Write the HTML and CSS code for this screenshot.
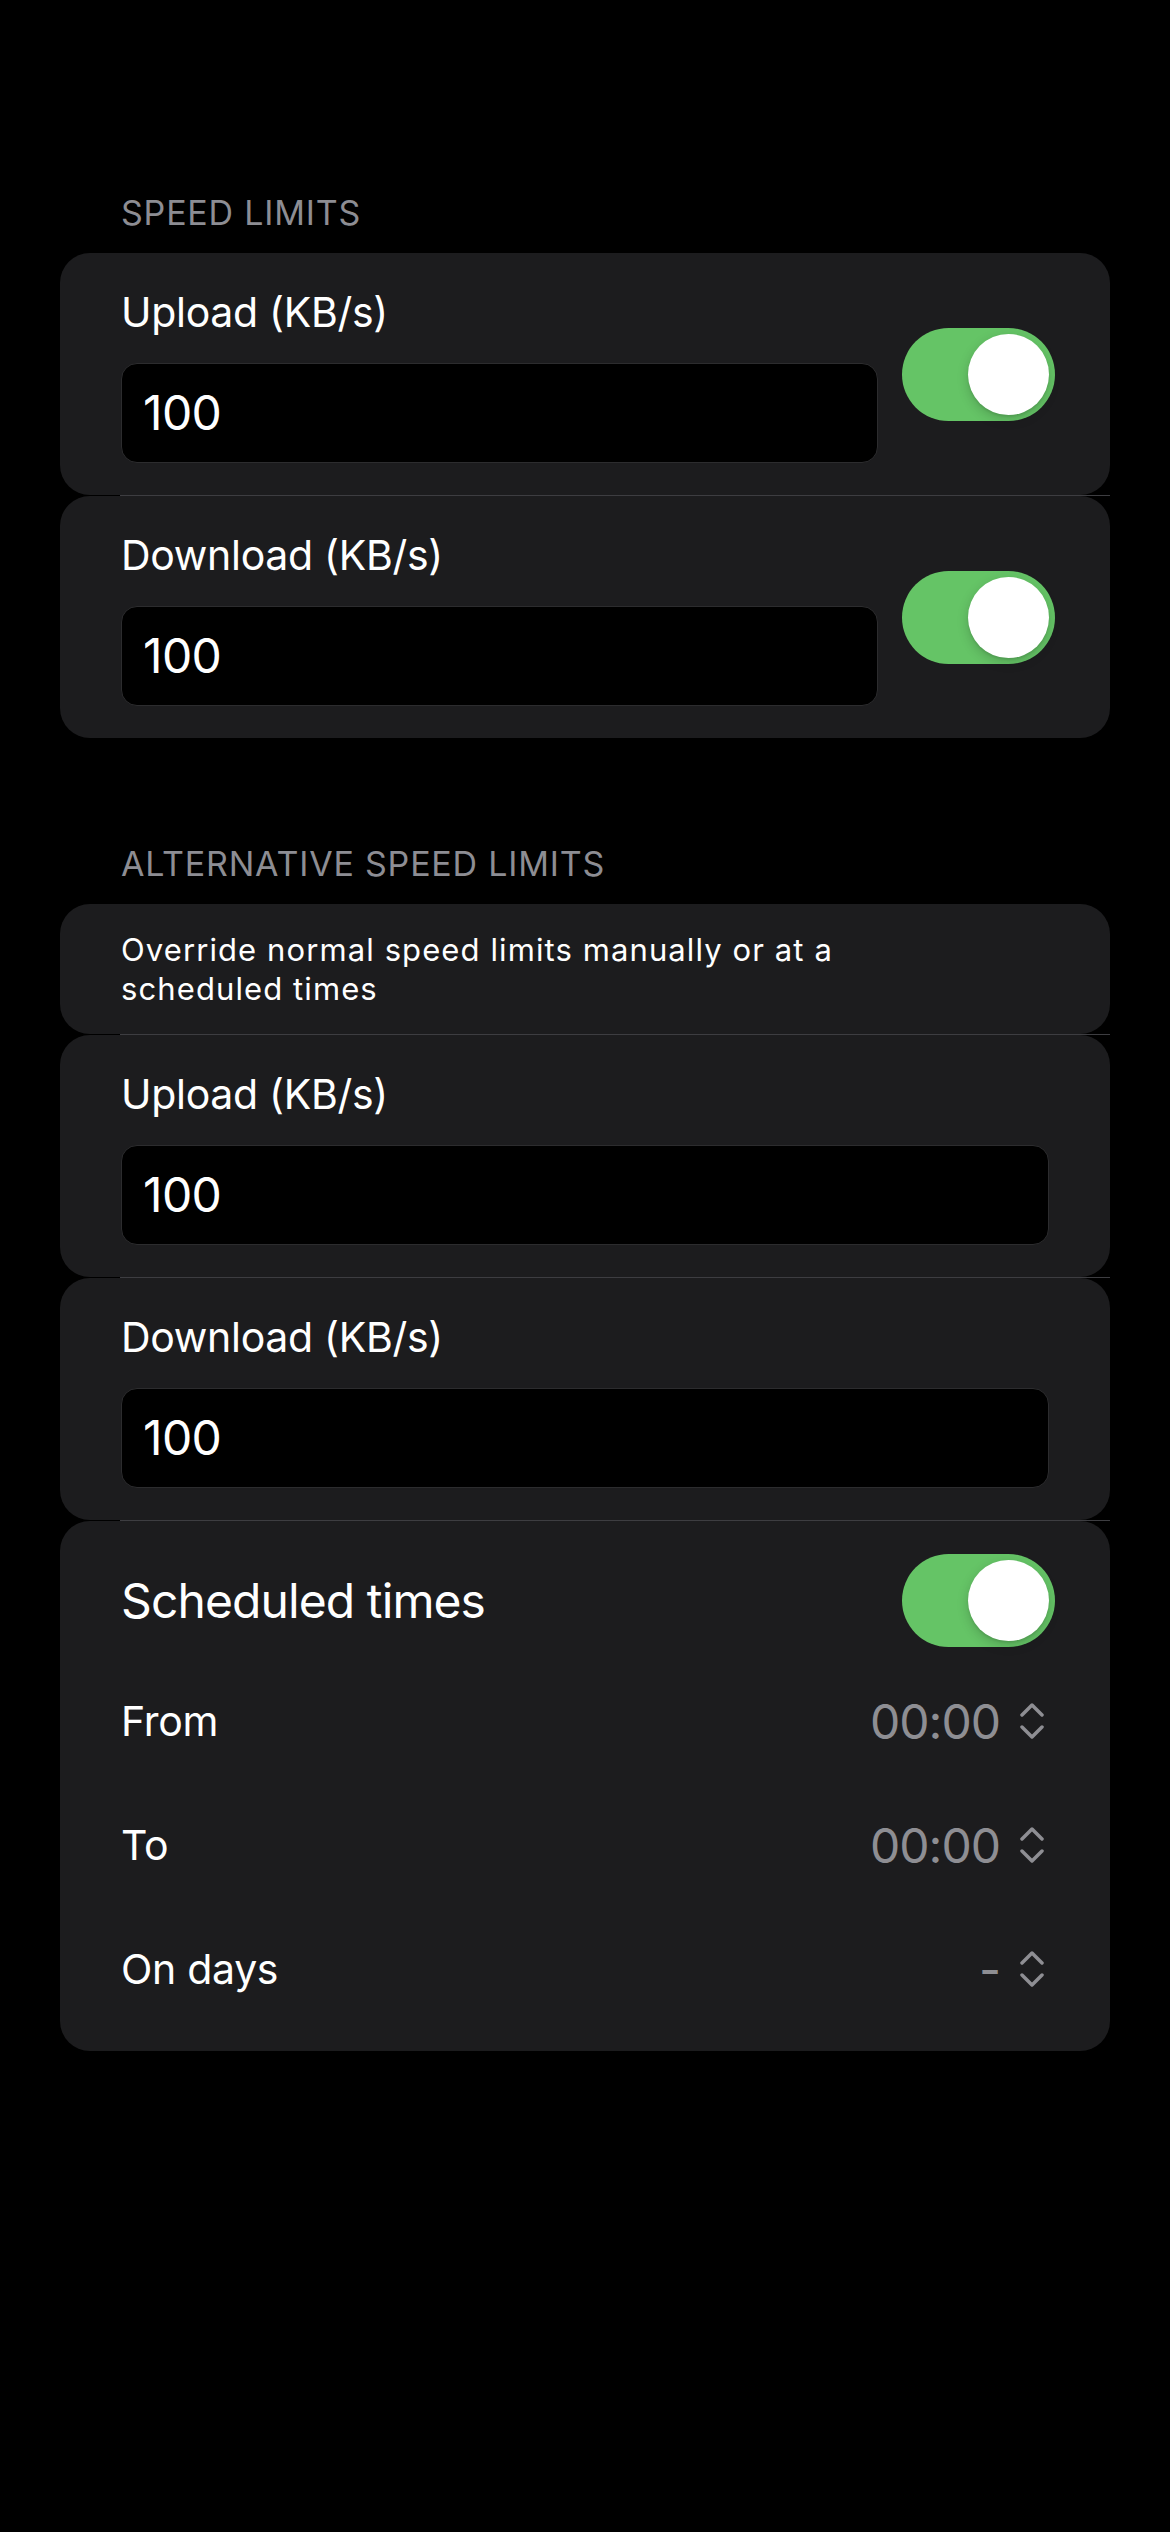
FILE: index.html
```html
<!DOCTYPE html>
<html lang="en">
<head>
<meta charset="utf-8">
<title>Speed Limits</title>
<link rel="stylesheet" href="styles.css">
</head>
<body>
<main class="page">
  <section class="group">
    <h2 class="group-title">SPEED LIMITS</h2>
    <div class="list">
      <div class="row field-row">
        <div class="field">
          <div class="field-label">Upload (KB/s)</div>
          <div class="input">100</div>
        </div>
        <div class="toggle"><span class="knob"></span></div>
      </div>
      <div class="sep"></div>
      <div class="row field-row">
        <div class="field">
          <div class="field-label">Download (KB/s)</div>
          <div class="input">100</div>
        </div>
        <div class="toggle"><span class="knob"></span></div>
      </div>
    </div>
  </section>

  <section class="group group-alt">
    <h2 class="group-title">ALTERNATIVE SPEED LIMITS</h2>
    <div class="list">
      <div class="row desc-row">
        <p class="desc">Override normal speed limits manually or at a<br>scheduled times</p>
      </div>
      <div class="sep"></div>
      <div class="row field-row wide">
        <div class="field">
          <div class="field-label">Upload (KB/s)</div>
          <div class="input">100</div>
        </div>
      </div>
      <div class="sep"></div>
      <div class="row field-row wide">
        <div class="field">
          <div class="field-label">Download (KB/s)</div>
          <div class="input">100</div>
        </div>
      </div>
      <div class="sep"></div>
      <div class="row schedule">
        <div class="switch-row">
          <span class="switch-label">Scheduled times</span>
          <div class="toggle"><span class="knob"></span></div>
        </div>
        <div class="picker-row">
          <span class="picker-label">From</span>
          <span class="picker-value">00:00<svg class="chev" viewBox="0 0 24 36" width="24" height="36"><polyline points="2,12 12,2 22,12"/><polyline points="2,24 12,34 22,24"/></svg></span>
        </div>
        <div class="picker-row">
          <span class="picker-label">To</span>
          <span class="picker-value">00:00<svg class="chev" viewBox="0 0 24 36" width="24" height="36"><polyline points="2,12 12,2 22,12"/><polyline points="2,24 12,34 22,24"/></svg></span>
        </div>
        <div class="picker-row">
          <span class="picker-label">On days</span>
          <span class="picker-value">-<svg class="chev" viewBox="0 0 24 36" width="24" height="36"><polyline points="2,12 12,2 22,12"/><polyline points="2,24 12,34 22,24"/></svg></span>
        </div>
      </div>
    </div>
  </section>
</main>
</body>
</html>
```

FILE: styles.css
```css
* { box-sizing: border-box; }

html, body {
  margin: 0;
  padding: 0;
  background: #000;
}

body {
  width: 1170px;
  min-height: 2532px;
  font-family: Inter, "Noto Sans", "Liberation Sans", sans-serif;
  color: #fff;
}

.page {
  padding: 193px 60px 0 60px;
}

.group-title {
  margin: 0 0 20px 61px;
  font-size: 34px;
  line-height: 40px;
  font-weight: 400;
  color: #8d8d93;
  letter-spacing: 0.8px;
}

.group-alt {
  margin-top: 106px;
}

.list {
  display: flex;
  flex-direction: column;
}

.row {
  background: #1c1c1e;
  border-radius: 30px;
}

.sep {
  height: 1px;
  margin-left: 60px;
  background: #3d3d41;
}

.field-row {
  display: flex;
  align-items: center;
  gap: 24px;
  padding: 33px 55px 32px 61px;
  height: 242px;
}

.field-row.wide {
  padding-right: 61px;
}

.field {
  flex: 1;
  display: flex;
  flex-direction: column;
  gap: 26px;
}

.field-label {
  font-size: 41px;
  line-height: 50px;
  letter-spacing: -0.3px;
}

.input {
  height: 100px;
  background: #000;
  border: 1px solid #2c2c2e;
  border-radius: 16px;
  padding-left: 21px;
  display: flex;
  align-items: center;
  font-size: 48px;
  letter-spacing: -0.6px;
}

.toggle {
  flex: none;
  width: 153px;
  height: 93px;
  border-radius: 47px;
  background: #65c466;
  position: relative;
}

.knob {
  position: absolute;
  top: 6px;
  right: 6px;
  width: 81px;
  height: 81px;
  border-radius: 50%;
  background: #fff;
  box-shadow: 0 4px 12px rgba(0, 0, 0, 0.18), 0 2px 2px rgba(0, 0, 0, 0.08);
}

.desc-row {
  padding: 27px 61px 26px 61px;
}

.desc {
  margin: 0;
  font-size: 31px;
  line-height: 38.5px;
  letter-spacing: 1.1px;
}

.schedule {
  padding: 33px 55px 20px 61px;
}

.switch-row {
  display: flex;
  align-items: center;
  justify-content: space-between;
  height: 93px;
  margin-bottom: 12px;
}

.switch-label {
  font-size: 48px;
  letter-spacing: -0.9px;
}

.picker-row {
  display: flex;
  align-items: center;
  justify-content: space-between;
  height: 124px;
  padding-right: 11px;
}

.picker-label {
  font-size: 41px;
  letter-spacing: -0.3px;
}

.picker-value {
  display: flex;
  align-items: center;
  gap: 20px;
  font-size: 48px;
  color: #8e8e93;
  letter-spacing: -1px;
}

.chev {
  fill: none;
  stroke: #8e8e93;
  stroke-width: 3.5;
  stroke-linecap: round;
  stroke-linejoin: round;
}
```
